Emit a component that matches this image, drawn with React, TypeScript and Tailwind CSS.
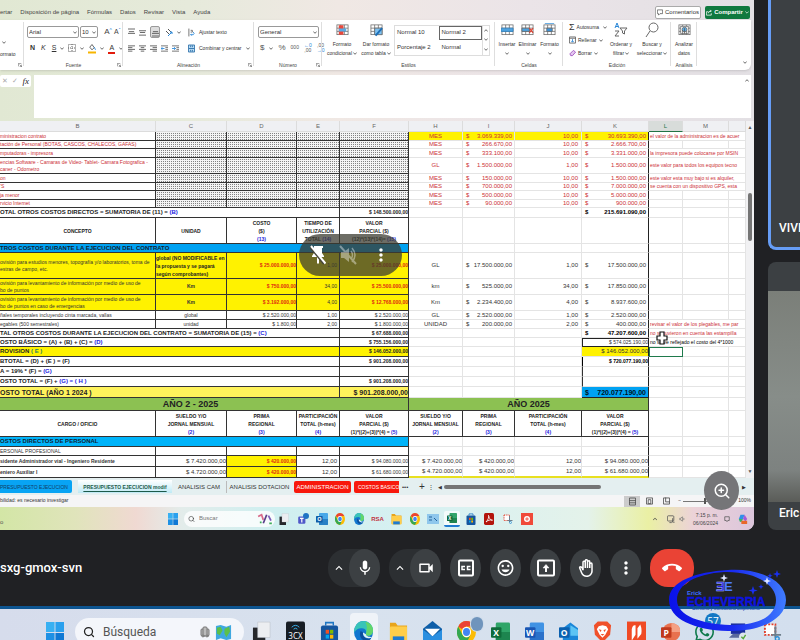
import React from "react";
import type { ReactNode } from "react";
import {
  MdMic, MdOutlineVideocam, MdMood, MdMoreVert, MdCallEnd,
  MdKeyboardArrowUp, MdOutlineBackHand,
} from "react-icons/md";
import { FaWhatsapp } from "react-icons/fa";
import { Search, ZoomIn, Luggage } from "lucide-react";

/* ---------- small shared drawings ---------- */

const Caret = () => (
  <svg viewBox="0 0 6 4" className="h-[3px] w-1 shrink-0" fill="none" stroke="#555" strokeWidth="1.3"><path d="M.5.5 3 3.2 5.5.5" /></svg>
);

const Lines = ({ rows }: { rows: string[] }) => (
  <svg viewBox="0 0 8 9" className="h-[9px] w-[7px]" fill="none" stroke="#555" strokeWidth="1"><path d={rows.join("")} /></svg>
);
const alignTop = ["M0 .5H8", "M1 3.5H7", "M0 5.5H8"];
const alignMid = ["M0 2.5H8", "M1 4.5H7", "M0 7.5H8"];
const alignLow = ["M1 3.5H7", "M0 5.5H8", "M0 8.5H8"];
const left = ["M0 1.5H8", "M0 3.5H5", "M0 5.5H8", "M0 7.5H5"];
const center = ["M0 1.5H8", "M2 3.5H6", "M0 5.5H8", "M2 7.5H6"];
const right = ["M0 1.5H8", "M3 3.5H8", "M0 5.5H8", "M3 7.5H8"];

const Indent = ({ d }: { d: string }) => (
  <svg viewBox="0 0 8 9" className="h-[9px] w-[7px]" fill="none" stroke="#666" strokeWidth="1">
    <path d="M0 1.5H8M5 3.5H8M5 5.5H8M0 7.5H8" /><path d={d} stroke="#2b88d8" />
  </svg>
);

const SheetIcon = ({ children }: { children?: ReactNode }) => (
  <svg viewBox="0 0 14 14" className="h-[14px] w-[13px]" fill="none" stroke="#666" strokeWidth=".8">
    <rect x="1" y="1.5" width="12" height="10.500" fill="#fff" /><path d="M1 5H13M1 8.500H13M5 1.500V12M9 1.500V12" />
    {children}
  </svg>
);

const WinLogo = ({ className }: { className: string }) => (
  <svg viewBox="0 0 20 20" className={className} preserveAspectRatio="none">
    <path d="M0 0H9.500V9.500H0z" fill="#38b0f2" /><path d="M10.500 0H20V9.500H10.500z" fill="#2aa0ee" />
    <path d="M0 10.500H9.500V20H0z" fill="#1e90e4" /><path d="M10.500 10.500H20V20H10.500z" fill="#0f78d4" />
  </svg>
);

const Chrome = ({ className }: { className: string }) => (
  <svg viewBox="0 0 20 20" className={className} preserveAspectRatio="none">
    <circle cx="10" cy="10" r="10" fill="#fbbc05" />
    <path d="M10 0A10 10 0 0 1 18.700 5H10A5 5 0 0 0 5.600 7.500L1.300 5A10 10 0 0 1 10 0z" fill="#ea4335" />
    <path d="M1.300 5A10 10 0 0 0 10 20L14.300 12.500A5 5 0 0 1 5.700 12.500z" fill="#34a853" />
    <circle cx="10" cy="10" r="4.800" fill="#fff" /><circle cx="10" cy="10" r="3.700" fill="#4285f4" />
  </svg>
);

const Edge = ({ className }: { className: string }) => (
  <svg viewBox="0 0 20 20" className={className} preserveAspectRatio="none">
    <circle cx="10" cy="10" r="10" fill="#1277cf" />
    <path d="M.3 8C1.500 3 5.500 0 10 0c6 0 10 4 10 8.500 0 3-2 5-5 5-2 0-3-.8-2.500-1.800 1.200-2.400-.5-5.200-4-5.200C5 6.500 1.500 7.500.3 11z" fill="#39c4b8" />
    <path d="M12 1c5 .5 8 4 8 7.500 0 3-2 5-5 5-2 0-3-.8-2.500-1.800C14 8 14 4 12 1z" fill="#63d66a" />
    <path d="M7 9c-2 4 0 8.500 5.500 9 3 0 5-1.500 6-3-4 2-10 .5-9-4.500" fill="#0c4f9c" />
    <path d="M9.500 10.500c-.3 3.500 3 5.800 7.500 5 1.500-.5 2.300-1 2.300-1C17 14.500 13 14.500 12.500 12z" fill="#dff2f8" />
  </svg>
);

const Folder = ({ className }: { className: string }) => (
  <svg viewBox="0 0 20 20" className={className} preserveAspectRatio="none">
    <path d="M1 1.500H7L9 4H19V18H1z" fill="#e8a51c" /><rect x="1" y="5" width="18" height="14" rx="1" fill="#ffce4a" />
    <path d="M4 19v-5H16v5z" fill="#1f7bd0" />
  </svg>
);

const Store = ({ className }: { className: string }) => (
  <svg viewBox="0 0 20 20" className={className} preserveAspectRatio="none">
    <path d="M6 4V1.500H14V4" fill="none" stroke="#1f77c4" strokeWidth="1.500" /><rect x="1" y="4" width="18" height="16" rx="2" fill="#15569f" />
    <path d="M6 8h3.500v3.500H6z" fill="#f25022" /><path d="M10.500 8H14v3.500h-3.500z" fill="#7fba00" />
    <path d="M6 12.500h3.500V16H6z" fill="#00a4ef" /><path d="M10.500 12.500H14V16h-3.500z" fill="#ffb900" />
  </svg>
);

const Snip = ({ className }: { className: string }) => (
  <svg viewBox="0 0 20 20" className={className} fill="none">
    <rect x="2" y="2" width="11" height="11" stroke="#e0402c" strokeWidth="2" strokeDasharray="2 1.500" fill="#fff" />
    <path d="M13 4V13H19M9 13l4 0M13 13v3" stroke="#6d7f8c" strokeWidth="2" /><circle cx="15" cy="17" r="2" stroke="#2a8fd6" strokeWidth="1.500" />
  </svg>
);

const TaskView = ({ className }: { className: string }) => (
  <svg viewBox="0 0 20 20" className={className} preserveAspectRatio="none"><path d="M1 6H14V20H1z" fill="#25272b" /><path d="M6 1H19V15H6z" fill="#eceef1" stroke="#b9bdc4" strokeWidth=".5" /></svg>
);

const DocTile = ({ letter, dark, light, className }: { letter: string; dark: string; light: string; className: string }) => (
  <svg viewBox="0 0 20 20" className={className}>
    <rect x="5" y="0" width="15" height="20" rx="1.500" fill={light} /><path d="M5 10H20V20H5z" fill={dark} opacity=".55" />
    <rect x="0" y="5" width="11" height="11" rx="1" fill={dark} />
    <text x="5.500" y="14" textAnchor="middle" fontSize="9" fontWeight="700" fill="#fff" fontFamily="Open Sans, sans-serif">{letter}</text>
  </svg>
);

/* ---------- ribbon ---------- */

function Group({ title, className, launcher, children }: { title: string; className: string; launcher?: boolean; children?: ReactNode }) {
  return (
    <section className={`relative flex shrink-0 flex-col after:absolute after:top-0.5 after:right-0 after:h-11 after:w-px after:bg-[#dedede] ${className}`}>
      <div className="flex h-10 items-center">{children}</div>
      <h2 className="text-center text-[5px] leading-[10px] text-[#444]">{title}</h2>
      {launcher && <svg viewBox="0 0 6 6" className="absolute right-[2px] bottom-[3px] h-1 w-1" fill="none" stroke="#666"><path d="M.5 5V.5H5M2.500 2.500 5.500 5.500M5.500 2.500V5.500H2.500" /></svg>}
    </section>
  );
}

function Pick({ value, label, className }: { value: string; label: string; className: string }) {
  return (
    <span className={`relative flex h-3 items-center ${className}`}>
      <select aria-label={label} className="h-3 w-full appearance-none rounded-xs border border-[#999] bg-white pl-px text-[6px] leading-[8px] text-[#333]">
        <option>{value}</option>
      </select>
      <span className="pointer-events-none absolute right-0.5"><Caret /></span>
    </span>
  );
}

function Big({ icon, lines, caret, single, className }: { icon: ReactNode; lines: string[]; caret?: boolean; single?: boolean; className: string }) {
  return (
    <button className={`flex shrink-0 flex-col items-center text-[5px] leading-[9px] whitespace-nowrap text-[#333] ${className}`}>
      <span className="mb-0.5 flex h-4 items-center">{icon}</span>
      {lines.map((l, i) => (
        <span key={l} className="flex h-[9px] items-center gap-px">{l}{caret && i === lines.length - 1 && <Caret />}</span>
      ))}
      {single && <span className="flex h-[9px] items-center"><Caret /></span>}
    </button>
  );
}

function Ribbon() {
  return (
    <div className="mr-[3px] flex h-[50px] shrink-0 overflow-hidden rounded-br-md bg-white shadow-sm">
      <Group title="" className="w-6" launcher>
        <button className="flex flex-col items-start gap-1.5 pt-5 text-[5px] leading-[9px] text-[#333]"><span className="ml-0.5"><Caret /></span>ormato</button>
      </Group>
      <Group title="Fuente" className="w-[99px]" launcher>
        <div className="flex flex-col gap-1 pl-[3px]">
          <div className="flex items-center gap-px">
            <Pick label="Fuente" value="Arial" className="w-[52px]" />
            <Pick label="Tamaño" value="10" className="w-[18px]" />
            <button className="ml-1 w-2.5 text-[8px] leading-3 text-[#444]">A<sup className="text-[5px] text-[#2b88d8]">^</sup></button>
            <button className="text-[7px] leading-3 text-[#444]">A<sup className="text-[5px] text-[#2b88d8]">ˇ</sup></button>
          </div>
          <div className="flex h-3 items-center gap-1 pl-[3px] text-[7px] leading-3 text-[#333]">
            <button className="font-bold">N</button><button className="ml-0.5 italic">K</button><button className="ml-0.5 underline">S</button><Caret />
            <svg viewBox="0 0 8 8" className="h-2 w-2" fill="none" stroke="#666" strokeDasharray="1 1"><path d="M.5.5H7.500V7.500H.5zM4 0V8M0 4H8" /></svg><Caret />
            <svg viewBox="0 0 9 11" className="h-[11px] w-2"><path d="M2 4 4.500 1 7 4.500 4.500 7z" fill="#fff" stroke="#555" /><path d="M7 4l1.500 3" stroke="#2b88d8" /><path d="M0 9H9V11H0z" fill="#f7b500" /></svg><Caret />
            <button className="h-[11px] border-b-2 border-[#e11b0c] px-px leading-[10px]">A</button><Caret />
          </div>
        </div>
      </Group>
      <Group title="Alineación" className="w-[131px]" launcher>
        <div className="flex w-[61px] flex-col gap-1 pl-[5px]">
          <div className="flex h-3 items-center gap-1">
            <Lines rows={alignTop} /><Lines rows={alignMid} />
            <span className="flex h-3 w-2.5 items-center justify-center rounded-xs border border-[#999] bg-[#ddd]"><Lines rows={alignLow} /></span>
            <svg viewBox="0 0 8 9" className="ml-px h-[9px] w-2" fill="none" stroke="#555"><path d="M1 3l3 3M3 1l3 3" /><path d="M3 8 7 4M5 4H7V6" stroke="#2b88d8" /></svg><Caret />
          </div>
          <div className="flex h-3 items-center gap-1">
            <Lines rows={left} /><Lines rows={center} /><Lines rows={right} /><Indent d="M4 4.500H0M1.500 3 0 4.500 1.500 6" /><Indent d="M0 4.500H4M2.500 3 4 4.500 2.500 6" />
          </div>
        </div>
        <div className="flex flex-col gap-1 pl-1 text-[5px] leading-3 text-[#333]">
          <button className="flex items-center gap-1"><svg viewBox="0 0 8 9" className="h-[9px] w-[7px]" fill="none" stroke="#666"><path d="M1 0V9M3 2H5V4H3" /><path d="M3 7H6Q8 6 6 4M4 6 3 7 4 8" stroke="#2b88d8" /></svg>Ajustar texto</button>
          <button className="flex items-center gap-1 whitespace-nowrap"><svg viewBox="0 0 8 9" className="h-[9px] w-[7px]" fill="#b9dcf5" stroke="#2b6ea8"><path d="M.5.5H7.500V8.500H.5zM3 1V3M5 1V3M3 6V8M5 6V8M1 4.500H7" /></svg>Combinar y centrar<Caret /></button>
        </div>
      </Group>
      <Group title="Número" className="w-[68px]" launcher>
        <div className="flex flex-col gap-1 pl-1">
          <Pick label="Formato de número" value="General" className="w-[61px]" />
          <div className="flex h-3 items-center gap-[5px] pl-0.5 text-[8px] text-[#555]">
            <button>$</button><Caret /><button>%</button><button className="text-[5px]">000</button>
            <button className="text-[5px] leading-[5px]"><span className="block text-[#2b88d8]">←0</span>,00</button><button className="text-[5px] leading-[5px]">,00<span className="block text-[#2b88d8]">→0</span></button>
          </div>
        </div>
      </Group>
      <Group title="Estilos" className="w-[173px]">
        <Big className="ml-[3px] w-[34px]" caret lines={["Formato", "condicional"]} icon={<SheetIcon><path d="M3 2H8V12H3z" fill="#e8483c" stroke="none" /><path d="M3 5.500H11V8.500H3z" fill="#58a9e4" stroke="none" /></SheetIcon>} />
        <Big className="w-[34px]" caret lines={["Dar formato", "como tabla"]} icon={<SheetIcon><path d="M5 5H13V12H5z" fill="#7cc0f0" /><path d="M6 13 13 5" stroke="#1c6fb8" strokeWidth="2" /></SheetIcon>} />
        <div className="ml-px flex h-[31px] w-24 border border-[#ddd] text-[6px] text-[#333]">
          <div className="grid flex-1 grid-cols-2 grid-rows-2 text-left">
            <button className="pl-0.5 text-left">Normal 10</button><button className="border border-[#666] pl-0.5 text-left">Normal 2</button>
            <button className="pl-0.5 text-left whitespace-nowrap">Porcentaje 2</button><button className="pl-[3px] text-left">Normal</button>
          </div>
          <div className="flex w-[7px] flex-col items-center justify-around border-l border-[#ddd]"><span className="flex rotate-180"><Caret /></span><Caret /><Caret /></div>
        </div>
      </Group>
      <Group title="Celdas" className="w-[68px]">
        <Big className="ml-0.5 w-5" single lines={["Insertar"]} icon={<SheetIcon><path d="M0 5H13V8.500H0z" fill="#4fa3e0" stroke="#2b7fc0" /></SheetIcon>} />
        <Big className="w-[21px]" single lines={["Eliminar"]} icon={<SheetIcon><path d="M1 5H9V8.500H1z" fill="#4fa3e0" /><path d="M9 5l4 5M13 5l-4 5" stroke="#e04030" strokeWidth="1.200" /></SheetIcon>} />
        <Big className="w-[23px]" single lines={["Formato"]} icon={<SheetIcon><path d="M4 5H10V8.500H4z" fill="#3b94dc" /><path d="M2 0H12" stroke="#3b94dc" /></SheetIcon>} />
      </Group>
      <Group title="Edición" className="w-[108px]">
        <div className="flex w-[44px] flex-col pl-1.5 text-[5px] leading-[13px] text-[#333]">
          <button className="flex items-center gap-0.5"><span className="w-[7px] text-[9px]">Σ</span>Autosuma<span className="ml-0.5"><Caret /></span></button>
          <button className="flex items-center gap-0.5"><svg viewBox="0 0 8 8" className="h-2 w-[7px]" fill="none" stroke="#666"><path d="M.5.5H7.500V7.500H.5zM0 2H8" /><path d="M4 3V6M2.500 5 4 6.500 5.500 5" stroke="#2b88d8" /></svg>Rellenar<Caret /></button>
          <button className="flex items-center gap-0.5"><svg viewBox="0 0 8 8" className="h-2 w-[7px]" fill="#e4c8f0" stroke="#a050c0"><path d="M1 5 5 1 7.500 3 4 7H2z" /></svg>Borrar<Caret /></button>
        </div>
        <Big className="w-7" caret lines={["Ordenar y", "filtrar"]} icon={
          <svg viewBox="0 0 14 16" className="h-4 w-[14px]" fill="none" stroke="#666"><path d="M1 6 3 1 5 6M2 4.500H4" stroke="#2b88d8" /><path d="M1 9H5L1 14H5" /><path d="M6 6H13L10.500 9V12L8.500 11V9z" /></svg>} />
        <Big className="ml-px w-8" caret lines={["Buscar y", "seleccionar"]} icon={<svg viewBox="0 0 14 16" className="h-4 w-[14px]" fill="none" stroke="#666"><circle cx="8.500" cy="5.500" r="4.500" /><path d="M5 9 1 15" /></svg>} />
      </Group>
      <Group title="Análisis" className="w-[26px]">
        <Big className="w-[26px]" lines={["Analizar", "datos"]} icon={<SheetIcon><rect x="3" y="3" width="8" height="8" fill="#fff" /><circle cx="7" cy="6.500" r="2.500" fill="#5aaee8" /><path d="M5 11V7M7 11V5M9 11V8" stroke="#555" /></SheetIcon>} />
      </Group>
      <div className="flex flex-1 items-end justify-end pr-1 pb-1.5"><Caret /></div>
    </div>
  );
}

/* ---------- worksheet ---------- */

type Cell = { t?: ReactNode; m?: string; c?: string; s?: number };

const B = ({ children }: { children: ReactNode }) => <span className="text-[#2222e0]">{children}</span>;

const K = "border-b border-r border-[#333]";
const G = "border-b border-r border-[#e4e4e4]";
const GK = "border-b border-r border-b-[#e4e4e4] border-r-[#222]";
const HATCH = K + " bg-[linear-gradient(#f4f4f4_1px,transparent_1px),linear-gradient(90deg,#f4f4f4_1px,#828282_1px)] bg-[length:2px_2px]";
const RED = " text-[#cc2f36]";
const YEL = " bg-[#fff200]";
const SMALL = " text-[5px]";
const hatch: Cell[] = [{ c: HATCH }, { c: HATCH }, { c: HATCH }, { c: HATCH }];
const tail: Cell[] = [{ c: G }, { c: G }, { c: G }];
const blankRight: Cell[] = [{ c: G }, { c: G }, { c: G }, { c: GK }, ...tail];
const remark = (t: string, color = RED): Cell[] => [{ t, c: G + color + SMALL + " pl-px", s: 3 }];

const direct = (name: ReactNode, h: string, unit: string, price: string, qty: string, total: string, note?: string, hot = ""): { h: string; cells: Cell[] } => ({
  h,
  cells: [
    { t: name, c: K + RED + SMALL },
    ...hatch,
    { t: unit, c: G + RED + hot + " text-center" },
    { m: price, c: G + RED + hot },
    { t: qty, c: G + RED + hot + " text-right pr-[3px]" },
    { m: total, c: GK + RED + hot },
    ...(note ? remark(note) : tail),
  ],
});

const work = (
  name: ReactNode, h: string, leftCells: string[], unit: string, price: string, qty: string, total: string, hot: boolean, note?: string
): { h: string; cells: Cell[] } => {
  const y = hot ? YEL : "";
  const r = hot ? " font-bold text-[#e02a10]" : " text-[#333]";
  return {
    h,
    cells: [
      { t: name, c: K + y + SMALL + " text-[#333]" },
      { t: leftCells[0], c: K + y + SMALL + " text-center" + (hot ? " font-bold" : "") },
      { t: leftCells[1], c: K + y + r + SMALL + " text-right" },
      { t: leftCells[2], c: K + y + SMALL + " text-right pr-0.5" },
      { t: leftCells[3], c: K + y + r + SMALL + " text-right" },
      { t: unit, c: G + " text-center" },
      { m: price, c: G },
      { t: qty, c: G + " text-right pr-[3px]" },
      { m: total, c: GK },
      ...(note ? remark(note) : tail),
    ],
  };
};

const three = (a: string, b: string, c: ReactNode) => <>{a}<br />{b}<br />{c}</>;
const HEAD = K + " text-center font-bold text-[5px] leading-[8px] text-[#222]";

const sumRow = (h: string, label: ReactNode, value: string, rest: Cell[], bg = "", big = false): { h: string; cells: Cell[] } => ({
  h,
  cells: [
    { t: label, c: K + bg + " font-bold text-[#222]" + (big ? " text-[7px]" : ""), s: 4 },
    { t: value, c: K + bg + " text-right font-bold text-[#222]" + (big ? " text-[7px]" : " text-[5px]") },
    ...rest,
  ],
});

const kOnly = (cell: Cell, end: Cell[] = tail): Cell[] => [{ c: G }, { c: G }, { c: G }, cell, ...end];

const rows: { h: string; cells: Cell[] }[] = [
  direct("ministracion contrato", "h-[9px]", "MES", "3.069.339,00", "10,00", "30.693.390,00", "el valor de la administracion es de acuer", YEL),
  direct("tación de Personal (BOTAS, CASCOS, CHALECOS, GAFAS)", "h-2", "MES", "266.670,00", "10,00", "2.666.700,00"),
  direct("mputadoras - impresora", "h-[9px]", "MES", "333.100,00", "10,00", "3.331.000,00", "la impresora puede colocarse por MSIN"),
  direct(<>encias Software - Camaras de Video- Tablet- Camara Fotografica -<br />caner - Odometro</>, "h-4", "GL", "1.500.000,00", "1,00", "1.500.000,00", "este valor para todos los equipos tecno"),
  direct("on", "h-[9px]", "MES", "150.000,00", "10,00", "1.500.000,00", "este valor esta muy bajo si es alquiler,"),
  direct("'S", "h-2", "MES", "700.000,00", "10,00", "7.000.000,00", "se cuenta con un dispositivo GPS, esta"),
  direct("ja menor", "h-[9px]", "MES", "500.000,00", "10,00", "5.000.000,00"),
  direct("rvicio Internet", "h-2", "MES", "90.000,00", "10,00", "900.000,00"),
  sumRow("h-2.5", <>OTAL OTROS COSTOS DIRECTOS = SUMATORIA DE (11) = <B>(B)</B></>, "$ 148.500.000,00", kOnly({ m: "215.691.090,00", c: GK + " font-bold text-black" })),
  {
    h: "h-[26px]",
    cells: [
      { t: "CONCEPTO", c: HEAD }, { t: "UNIDAD", c: HEAD }, { t: three("COSTO", "($)", <B>(13)</B>), c: HEAD },
      { t: three("TIEMPO DE", "UTILIZACIÓN", <>TOTAL <B>(14)</B></>), c: HEAD },
      { t: three("VALOR", "PARCIAL ($)", <>(12)*(13)*(14)= <B>(15)</B></>), c: HEAD }, ...blankRight,
    ],
  },
  { h: "h-[9px]", cells: [{ t: "TROS COSTOS DURANTE LA EJECUCION DEL CONTRATO", c: K + " bg-[#00a2f2] font-bold text-[#123]", s: 5 }, ...blankRight] },
  work(
    <>ovisión para estudios menores, topografía y/o laboratorios, toma de<br />estras de campo, etc.</>, "h-[26px]",
    ["", "$ 25.000.000,00", "1,00", "$ 25.000.000,00"], "GL", "17.500.000,00", "1,00", "17.500.000,00", true
  ),
  work(<>ovisión para levantamiento de información por medio de uso de<br />bo de puntos</>, "h-4", ["Km", "$ 750.000,00", "34,00", "$ 25.500.000,00"], "km", "525.000,00", "34,00", "17.850.000,00", true),
  work(<>ovisión para levantamiento de información por medio de uso de<br />bo de puntos en caso de emergencias</>, "h-4", ["Km", "$ 3.192.000,00", "4,00", "$ 12.768.000,00"], "Km", "2.234.400,00", "4,00", "8.937.600,00", true),
  work("ñales temporales incluyendo cinta marcada, vallas", "h-[9px]", ["global", "$ 2.520.000,00", "1,00", "$ 2.520.000,00"], "GL", "2.520.000,00", "1,00", "2.520.000,00", false),
  work("egables (500 semestrales)", "h-[9px]", ["unidad", "$ 1.800,00", "2,00", "$ 1.800.000,00"], "UNIDAD", "200.000,00", "2,00", "400.000,00", false, "revisar el valor de los plegables, me par"),
  sumRow("h-[9px]", <>TAL OTROS COSTOS DURANTE LA EJECUCION DEL CONTRATO = SUMATORIA DE (15) = <B>(C)</B></>, "$ 67.688.000,00", kOnly({ m: "47.207.600,00", c: GK + " font-bold text-black" }, remark("no se tuvieron en cuenta las estampilla"))),
  sumRow("h-[9px]", <>OSTO BÁSICO = (A) + (B) + (C) = <B>(D)</B></>, "$ 755.156.000,00", kOnly({ t: "$ 574.025.190,00", c: "border border-[#222] text-right text-[5px]" }, remark("no se ve reflejado el costo del 4*1000", " text-black"))),
  sumRow("h-2.5", <>ROVISION <span className="text-[#2a7d6a]">( E )</span></>, "$ 146.052.000,00", kOnly({ t: "$ 146.052.000,00", c: GK + YEL + " text-right" }, [{ c: "border border-[#1f7a4c]" }, { c: G }, { c: G }]), YEL),
  sumRow("h-2.5", "BTOTAL = (D) + (E ) =  (F)", "$ 901.208.000,00", kOnly({ t: "$ 720.077.190,00", c: GK + " border-l text-right font-bold text-[5px] text-black" })),
  sumRow("h-2.5", <>A = 19% * (F) = <B>(G)</B></>, "", kOnly({ c: GK + " border-l" })),
  sumRow("h-2.5", <>OSTO TOTAL = (F) + <B>(G) = ( H )</B></>, "$ 901.208.000,00", kOnly({ c: GK + " border-l" })),
  sumRow("h-[11px]", "OSTO TOTAL (AÑO 1 2024 )", "$ 901.208.000,00", kOnly({ m: "720.077.190,00", c: "border-b border-r border-[#222] bg-[#00a2f2] font-bold text-[7px] text-[#012]" }), " bg-[#fff35c]", true),
  {
    h: "h-[13px]",
    cells: [
      { t: "AÑO 2 - 2025", c: K + " bg-[#8cc152] pr-[27px] text-center text-[9px] leading-[12px] font-bold text-[#222]", s: 5 },
      { t: "AÑO 2025", c: K + " bg-[#8cc152] text-center text-[9px] leading-[12px] font-bold text-[#222]", s: 4 }, ...tail,
    ],
  },
  {
    h: "h-[26px]",
    cells: [
      { t: "CARGO / OFICIO", c: HEAD }, { t: three("SUELDO Y/O", "JORNAL MENSUAL", <B>(2)</B>), c: HEAD }, { t: three("PRIMA", "REGIONAL", <B>(3)</B>), c: HEAD },
      { t: three("PARTICIPACIÓN", "TOTAL (h-mes)", <B>(4)</B>), c: HEAD }, { t: three("VALOR", "PARCIAL ($)", <>(1)*((2)+(3))*(4) = <B>(5)</B></>), c: HEAD },
      { t: three("SUELDO Y/O", "JORNAL MENSUAL", <B>(2)</B>), c: HEAD }, { t: three("PRIMA", "REGIONAL", <B>(3)</B>), c: HEAD },
      { t: three("PARTICIPACIÓN", "TOTAL (h-mes)", <B>(4)</B>), c: HEAD }, { t: three("VALOR", "PARCIAL ($)", <>(1)*((2)+(3))*(4) = <B>(5)</B></>), c: HEAD },
      ...tail,
    ],
  },
  { h: "h-2.5", cells: [{ t: "OSTOS DIRECTOS DE PERSONAL", c: K + " bg-[#00b4fa] font-bold text-[#123]", s: 5 }, ...blankRight] },
  { h: "h-[9px]", cells: [{ t: "ERSONAL PROFESIONAL", c: K + SMALL }, { c: K }, { c: K }, { c: K }, { c: K }, ...blankRight] },
  ...[["sidente Administrador vial - Ingeniero Residente", "$ 7.420.000,00", "$ 94.080.000,00"], ["eniero Auxiliar I", "$ 4.720.000,00", "$ 61.680.000,00"]].map(([n, pay, total], i) => {
    const e = i ? " border-b-2 border-b-[#e8e020]" : "";
    return {
      h: "h-[11px]",
      cells: [
        { t: n, c: K + SMALL + " font-bold" }, { t: pay, c: K + " text-right" }, { t: "$ 420.000,00", c: K + YEL + SMALL + " text-right font-bold text-[#e02a10]" },
        { t: "12,00", c: K + " text-right pr-0.5" }, { t: total, c: K + SMALL + " text-right" },
        { t: pay, c: G + e + " text-right" }, { t: "$ 420.000,00", c: G + e + " text-right" }, { t: "12,00", c: G + e + " text-right" }, { t: total, c: GK + e + " text-right" }, ...tail,
      ],
    };
  }),
];

/* The unit of the first provision carries its own condition on three lines. */
rows[11].cells[1] = { t: three("global (NO MODIFICABLE en", "la propuesta y se pagará", "según comprobantes)"), c: K + YEL + " text-left text-[5px] leading-[8px] font-bold text-[#222]" };

const columns: [string, string][] = [
  ["B", "w-[156px]"], ["C", "w-[71px]"], ["D", "w-[70px]"], ["E", "w-[43px]"], ["F", "w-[69px]"],
  ["H", "w-[54px]"], ["I", "w-[52px]"], ["J", "w-[67px]"], ["K", "w-[67px]"], ["L", "w-[34px]"], ["M", "w-[46px]"], ["", "w-auto"],
];

function Worksheet() {
  return (
    <div className="flex min-h-0 flex-1 overflow-hidden">
      <div className="min-w-0 flex-1 overflow-hidden bg-white">
        <table className="w-full table-fixed border-separate border-spacing-0 font-['Liberation_Sans',sans-serif] text-[6px] leading-[7px] text-[#333]">
          <thead>
            <tr>
              {columns.map(([name, w], i) => (
                <th key={i} scope="col" className={`h-[11px] border-r border-b border-[#dcdcdc] p-0 text-[6px] leading-[7px] font-normal ${w} ${name === "L" ? "border-b-[#217346] bg-[#d8dcda] text-[#217346]" : "bg-[#eff0f3] text-[#666]"}`}>{name}</th>
              ))}
            </tr>
          </thead>
          <tbody>
            {rows.map((r, i) => (
              <tr key={i}>
                {r.cells.map((c, j) => (
                  <td key={j} colSpan={c.s} className={`overflow-hidden p-0 align-middle whitespace-nowrap ${r.h} ${c.c ?? ""}`}>
                    {c.m ? <span className="flex justify-between pr-0.5 pl-[3px]"><span>$</span><span>{c.m}</span></span> : c.t}
                  </td>
                ))}
              </tr>
            ))}
          </tbody>
        </table>
      </div>
      <div className="flex w-2 shrink-0 flex-col items-center bg-[#f1f1f3] py-1 text-[5px] leading-[5px] text-[#555]">
        <span>▲</span><span className="mt-[63px] h-12 w-1 rounded-full bg-[#757575]" /><span className="mt-auto">▼</span>
      </div>
    </div>
  );
}

/* ---------- shared screen ---------- */

function InnerTaskbar() {
  return (
    <div className="flex h-[23px] shrink-0 items-center bg-[linear-gradient(90deg,#d3e6a6_0%,#e0e4bb_10%,#f0d9d2_18%,#e3ecea_24%,#cfeff0_36%,#d9f1f1_60%,#e4f2ea_78%,#eaf0a4_86%,#ecd2d8_92%,#dcc6dc_100%)]">
      <span className="w-[168px] pt-2 text-[6px] text-[#555]">o</span>
      <WinLogo className="h-3 w-2.5" />
      <label className="ml-1.5 flex h-4 w-[91px] items-center rounded-full bg-white/80 pl-1">
        <Search className="h-2 w-[7px] text-[#333]" />
        <input aria-label="Buscar" placeholder="Buscar" className="ml-1 w-10 bg-transparent text-[6px] placeholder:text-[#777]" />
        <svg viewBox="0 0 20 14" className="ml-auto h-3 w-5" fill="none" strokeWidth="2"><path d="M2 4 6 2 8 8" stroke="#d86a8a" /><path d="M8 12 12 2" stroke="#5b3d8a" /><path d="M14 3 17 9" stroke="#7a5ab8" /><path d="M4 11h2M15 12h3" stroke="#3fae5c" /></svg>
      </label>
      <div className="grid w-[261px] shrink-0 grid-cols-14 items-center justify-items-center">
        <TaskView className="h-3 w-2.5" />
        <svg viewBox="0 0 20 20" className="h-3.5 w-3"><rect x="2" y="6" width="12" height="12" rx="2" fill="#5059c9" /><circle cx="15" cy="5" r="5" fill="#1e73c4" /><path d="M5 9h6M8 9v7" stroke="#fff" strokeWidth="2" /></svg>
        <DocTile letter="O" dark="#0f5ea8" light="#48a8e8" className="h-3.5 w-3" />
        <Chrome className="h-3 w-2.5" /><Edge className="h-3 w-2.5" />
        <span className="text-[6px] leading-3 font-bold text-[#c0303c]">RSA</span>
        <Folder className="h-3 w-[11px]" /><Chrome className="h-3 w-2.5" />
        <svg viewBox="0 0 12 10" className="h-3 w-3"><rect width="12" height="10" fill="#8fc7ec" /><path d="M2 3h3M2 6h3M7 4l3 3" stroke="#23639c" /></svg>
        <span className="flex h-4 w-4 items-center justify-center rounded-xs border-b-2 border-[#1f7bd0] bg-white/70"><DocTile letter="X" dark="#0f6b3a" light="#34a46a" className="h-3 w-2.5" /></span>
        <Store className="h-3 w-2.5" />
        <svg viewBox="0 0 20 20" className="h-3 w-2.5" preserveAspectRatio="none"><rect width="20" height="20" rx="3" fill="#b3140c" /><path d="M4 15C9 11 10 6 9 4c2 6 4 8 8 8-5-1-9 0-13 3z" fill="none" stroke="#fff" strokeWidth="1.500" /></svg>
        <Snip className="h-3 w-2.5" />
        <svg viewBox="0 0 20 20" className="h-3.5 w-3"><rect width="20" height="20" fill="#f04a3a" /><circle cx="10" cy="10" r="5" fill="#fff" /><path d="M7 10h6M10 7v6" stroke="#f04a3a" strokeWidth="1.500" /></svg>
      </div>
      <div className="ml-auto flex items-center gap-1 pr-1.5 text-[#444]">
        <MdKeyboardArrowUp className="h-2.5 w-2" />
        <svg viewBox="0 0 10 10" className="ml-1 h-2.5 w-2" fill="none" stroke="#555"><rect x=".5" y="1" width="8" height="6.500" rx="1" /><path d="M3 9.500H6M7 4V9H9.500" /></svg>
        <svg viewBox="0 0 8 8" className="h-2 w-1.5" fill="none" stroke="#777"><path d="M1 3H2.500L4.500 1V7L2.500 5H1zM6 2.500Q7.500 4 6 5.500" /></svg>
        <span className="ml-1 text-right text-[5px] leading-2">7:15 p. m.<br />06/06/2024</span>
        <svg viewBox="0 0 8 8" className="ml-0.5 h-2 w-1.5" fill="none" stroke="#555"><path d="M1 1H7V6H5L4 7.500 3 6H1z" /></svg>
        <svg viewBox="0 0 12 12" className="ml-1 h-3 w-2.5"><path d="M1 6 3 1H8L6 6z" fill="#2f8fe8" /><path d="M8 1 11 6 9 9 6 6z" fill="#a45ad8" /><path d="M1 6H6L4 10 2 9z" fill="#35b56a" /><path d="M4 8H11V12H4z" fill="#e8682a" /></svg>
      </div>
    </div>
  );
}

function SharedScreen() {
  return (
    <div className="relative flex min-w-0 flex-1 flex-col overflow-hidden rounded-br-lg bg-[linear-gradient(90deg,#e1e8d3_0%,#e6eadb_25%,#f0e8e4_45%,#ebe4e8_70%,#e3e0e4_100%)] font-['Liberation_Sans',sans-serif]">
      <nav className="flex h-5 shrink-0 items-center gap-2 pt-1 pr-1 text-[6px] text-[#444]">
        <button>ertar</button><button>Disposición de página</button><button>Fórmulas</button><button>Datos</button><button>Revisar</button><button>Vista</button><button>Ayuda</button>
        <button className="ml-auto flex h-[13px] w-[46px] shrink-0 items-center justify-center gap-0.5 rounded-xs border border-[#aaa] bg-white text-[6px] leading-none text-[#333]"><svg viewBox="0 0 8 8" className="h-[7px] w-1.5" fill="none" stroke="#555"><path d="M.5.5H7.500V5.500H4L2 7.500V5.500H.5z" /></svg>Comentarios</button>
        <button className="-ml-1 flex h-[13px] w-[45px] shrink-0 items-center justify-center gap-0.5 rounded-xs bg-[#10793f] text-[6px] leading-none font-bold text-white"><svg viewBox="0 0 8 8" className="h-[7px] w-1.5" fill="none" stroke="#fff"><path d="M3 3H.5V7.500H7V5M3 5Q3 2 7 2M5.500.5 7 2 5.500 3.500" /></svg>Compartir<svg viewBox="0 0 6 4" className="h-[3px] w-1" fill="none" stroke="#fff"><path d="M.5.5 3 3 5.500.5" /></svg></button>
      </nav>
      <Ribbon />
      <div className="mt-[5px] mb-[3px] flex h-[43px] shrink-0 items-start gap-[3px] pr-[3px]">
        <div className="flex h-3 w-[31px] items-center justify-around rounded-xs bg-white text-[7px] text-[#aaa]">
          <button aria-label="Cancelar">✕</button><button aria-label="Aceptar">✓</button><button className="font-['Liberation_Serif',serif] text-[9px] leading-3 text-[#222] italic">fx</button>
        </div>
        <div className="relative h-full flex-1">
          <textarea aria-label="Barra de fórmulas" className="block h-full w-full resize-none bg-white p-1 text-[7px]" />
          <span className="absolute top-1 right-0.5 flex rotate-180"><Caret /></span>
        </div>
      </div>
      <Worksheet />
      <div className="flex h-[17px] shrink-0 items-center bg-[#e4eff0] text-[6px] leading-3 whitespace-nowrap text-[#333]">
        <button className="h-[13px] w-[72px] rounded-r-xs bg-[#08a4f4] text-left text-[5px] text-[#123c66]">PRESUPUESTO EJECUCION</button>
        <button className="ml-1.5 h-[13px] w-[94px] bg-[linear-gradient(#fff,#bfeaf5)] text-[5px] font-bold text-[#1c5a4a] underline underline-offset-2">PRESUPUESTO EJECUCION modif</button>
        <button className="w-[54px]">ANALISIS CAM</button>
        <button className="w-[66px] border-l border-[#bbb]">ANALISIS DOTACION</button>
        <button className="ml-0.5 h-3 w-[57px] rounded-xs bg-[#f8180c] text-[6px] text-white">ADMINISTRACION</button>
        <button className="ml-[3px] h-3 w-[45px] rounded-l-xs bg-[#f8180c] pl-1 text-left text-[5px] text-white">COSTOS BASICO</button>
        <span className="ml-[3px] w-[14px]">•••</span><button className="w-3 text-[10px]">+</button><span className="w-2.5">⋮</span>
        <span className="text-[5px]">◀</span><span className="ml-0.5 h-1 w-[157px] rounded-full bg-[#757575]" /><span className="mr-2 ml-auto text-[5px]">▶</span>
      </div>
      <div className="flex h-3 shrink-0 items-center bg-[#f5f5f6] text-[5px] text-[#333]">
        <span>bilidad: es necesario investigar</span>
        <div className="ml-auto flex items-center">
          <span className="flex h-[11px] w-4 items-center justify-center bg-[#ccc]"><Lines rows={["M.5 .5H7.500V8.500H.5z", "M0 3.500H8", "M0 6H8"]} /></span>
          <svg viewBox="0 0 8 8" className="ml-1.5 h-2 w-[7px]" fill="none" stroke="#555"><path d="M.5.5H7.500V7.500H.5zM2.500 2.500H5.500V7H2.500z" /></svg>
          <svg viewBox="0 0 8 8" className="ml-2.5 h-2 w-[7px]" fill="none" stroke="#555"><path d="M.5.5H7.500V7.500H.5zM3 0V5H8" /></svg>
          <span className="ml-2">−</span>
          <input type="range" aria-label="Zoom" className="mx-0.5 h-px w-11 appearance-none bg-[#777] [&::-webkit-slider-thumb]:h-1.5 [&::-webkit-slider-thumb]:w-0.5 [&::-webkit-slider-thumb]:appearance-none [&::-webkit-slider-thumb]:bg-[#555]" />
          <span>+</span><span className="mr-[3px] ml-1.5">100%</span>
        </div>
      </div>
      <InnerTaskbar />

      <svg viewBox="0 0 12 14" className="absolute top-[331px] left-[656px] h-3.5 w-3" fill="#fff" stroke="#111" strokeWidth="1.200"><path d="M4 1H8V5H11V9H8V13H4V9H1V5H4z" /></svg>
      <div className="absolute top-[234px] left-[299px] flex h-[42px] w-[103px] items-center justify-around rounded-full bg-[#3c3c32]/75 px-1 text-white">
        <button aria-label="Desfijar"><svg viewBox="0 0 16 20" className="h-5 w-4" fill="#fff"><path d="M4 1H13V3H12V8L14 11V12H9V18L8 19 7 18V12H2V11L4 8z" /><path d="M0 2 14 19" stroke="#46463a" strokeWidth="2" /><path d="M1 1 15.500 18.500" stroke="#fff" strokeWidth="2" /></svg></button>
        <button aria-label="Silenciar" className="opacity-40"><svg viewBox="0 0 18 20" className="h-5 w-[18px]" fill="#fff"><path d="M2 7H5L10 3V17L5 13H2z" /><path d="M12 6Q15 10 12 14M13 3Q19 10 13 17" fill="none" stroke="#fff" strokeWidth="1.500" /><path d="M1 1 17 19" stroke="#fff" strokeWidth="2" /></svg></button>
        <button aria-label="Más"><MdMoreVert className="h-6 w-5" /></button>
      </div>
      <button aria-label="Ampliar" className="absolute right-[15px] bottom-5 flex h-[39px] w-[35px] items-center justify-center rounded-[50%] bg-[#757578] text-white"><ZoomIn className="h-5 w-[18px]" /></button>
    </div>
  );
}

/* ---------- call controls and desktop ---------- */

const circle = "flex h-[38px] w-[31px] items-center justify-center rounded-[50%] bg-[#3c4043] text-white";

function CallBar() {
  return (
    <footer className="flex h-[76px] shrink-0 items-center text-white">
      <span className="w-[328px] font-['Roboto',sans-serif] text-[13px] font-medium">sxg-gmox-svn</span>
      <div className="flex items-center gap-[9px]">
        <div className="flex h-[38px] w-[52px] items-center justify-between rounded-[18px] bg-[#2c2f32] pl-1"><button aria-label="Opciones de audio"><MdKeyboardArrowUp className="h-4 w-3.5" /></button><button aria-label="Micrófono" className={circle}><MdMic className="h-5 w-[18px]" /></button></div>
        <div className="flex h-[38px] w-[52px] items-center justify-between rounded-[18px] bg-[#2c2f32] pl-1"><button aria-label="Opciones de video"><MdKeyboardArrowUp className="h-4 w-3.5" /></button><button aria-label="Cámara" className={circle}><MdOutlineVideocam className="h-5 w-[18px]" /></button></div>
        <button aria-label="Subtítulos" className={circle}><svg viewBox="0 0 16 18" className="h-[18px] w-4" fill="none" stroke="#fff" strokeWidth="2"><rect x="1" y="1.500" width="14" height="15" rx="1" /><path d="M7 7.500H4V10.500H7M12.500 7.500H9.500V10.500H12.500" strokeWidth="1.500" /></svg></button>
        <button aria-label="Reacciones" className={circle}><MdMood className="h-[22px] w-[19px]" /></button>
        <button aria-label="Presentar" className={circle}><svg viewBox="0 0 18 18" className="h-[18px] w-[18px]" fill="none" stroke="#fff" strokeWidth="2"><rect x="1" y="1.500" width="16" height="15" rx="1" /><path d="M9 13V8" /><path d="M6 9 9 5.500 12 9z" fill="#fff" strokeWidth=".5" /></svg></button>
        <button aria-label="Levantar la mano" className={circle}><MdOutlineBackHand className="h-[22px] w-[18px]" /></button>
        <button aria-label="Más opciones" className={circle}><MdMoreVert className="h-[22px] w-5" /></button>
        <button aria-label="Salir" className="flex h-[38px] w-11 items-center justify-center rounded-[18px] bg-[#ea4335] text-white"><MdCallEnd className="h-[22px] w-5" /></button>
      </div>
    </footer>
  );
}

const slot = "flex h-[31px] w-[34px] shrink-0 items-start justify-center pt-3";
const app = "h-[22px] w-[19px]";

function Taskbar() {
  return (
    <footer className="flex h-[34px] shrink-0 items-start overflow-hidden border-t-3 border-[#0d5591] bg-[linear-gradient(90deg,#d6dcec,#d8e2ee_45%,#d3dfee)] pl-[46px]">
      <WinLogo className="mt-[13px] h-[21px] w-[18px] shrink-0" />
      <label className="mt-[9px] ml-[11px] flex h-7 w-[169px] shrink-0 items-center rounded-full bg-[#f4f6fb] pl-2">
        <Search className="h-4 w-3 text-[#222]" strokeWidth={2.500} />
        <input aria-label="Búsqueda" placeholder="Búsqueda" className="ml-2 w-24 bg-transparent font-['Roboto',sans-serif] text-[12px] placeholder:text-[#555]" />
        <Luggage className="h-[18px] w-3 text-[#777]" fill="#bbb" />
        <svg viewBox="0 0 18 18" className="ml-1 h-[19px] w-[17px]"><path d="M1 2 6 1 12 3 17 1V16L12 17 6 15 1 17z" fill="#3fa8e0" /><path d="M2 4l4-1 2 4-3 5-3-2zM10 5l5-2 1 5-4 6-2-4z" fill="#5cc04a" /></svg>
      </label>
      <div className="flex flex-1">
        <span className={slot}><TaskView className={app} /></span>
        <span className={slot}><svg viewBox="0 0 20 22" className={app}><rect width="20" height="22" rx="2" fill="#171d24" /><path d="M6 6Q10 2 14 6M8 8Q10 6 12 8" fill="none" stroke="#3ab4f0" /><text x="10" y="18" textAnchor="middle" fontSize="8.500" fill="#fff" fontFamily="Open Sans, sans-serif">3CX</text></svg></span>
        <span className={slot}><Store className={app} /></span>
        <span className="flex h-[31px] w-[35px] items-start justify-center pt-1"><span className="flex h-8 w-7 justify-center rounded-sm bg-white/60 pt-2"><Edge className={app} /></span></span>
        <span className={slot}><Folder className={app} /></span>
        <span className={slot}><svg viewBox="0 0 20 20" className={app} preserveAspectRatio="none"><path d="M0 7 10 0 20 7V20H0z" fill="#0f5fa8" /><path d="M2 7H18L10 14z" fill="#fff" /><path d="M0 8 10 14 20 8V20H0z" fill="#2a8fe0" /></svg></span>
        <span className={slot + " relative"}><Chrome className={app} /><span className="absolute top-2 right-0 h-3.5 w-3 rounded-full bg-[#6f94bc] ring-1 ring-[#cfdcea]" /></span>
        <span className={slot}><DocTile letter="X" dark="#0f6b3a" light="#2fa568" className={app} /></span>
        <span className={slot}><DocTile letter="W" dark="#1a56b4" light="#3f92e4" className={app} /></span>
        <span className={slot}><svg viewBox="0 0 20 20" className={app}><path d="M4 6 12 0 20 6V20H4z" fill="#1a86d8" /><path d="M12 3 20 8V14H12z" fill="#5cc4f4" /><rect x="0" y="5" width="11" height="11" rx="1" fill="#0a5fae" /><text x="5.500" y="14" textAnchor="middle" fontSize="9" fontWeight="700" fill="#fff" fontFamily="Open Sans, sans-serif">O</text></svg></span>
        <span className={slot}><svg viewBox="0 0 20 22" className={app}><path d="M5 0H15L19 4 18 14 10 22 2 14 1 4z" fill="#f0502a" /><path d="M6 5 10 4 14 5 16 8 13 14 10 17 7 14 4 8z" fill="#fff" /><path d="M6 8 9 9 8 11zM14 8 11 9 12 11zM8 13H12L10 15z" fill="#f0502a" /></svg></span>
        <span className={slot}><svg viewBox="0 0 20 22" className={app}><rect width="20" height="22" fill="#f04a24" /><path d="M5 20V8Q6 3 9 4V14zM11 18V7L14 3Q16 8 15 13z" fill="#fff" /></svg></span>
        <span className={slot}><svg viewBox="0 0 20 20" className={app}><circle cx="11" cy="10" r="9.500" fill="#e8714e" /><path d="M11 .5A9.500 9.500 0 0 1 20.500 10H11z" fill="#f4a084" /><rect x="0" y="5" width="11" height="11" rx="1" fill="#c0391c" /><text x="5.500" y="14" textAnchor="middle" fontSize="9" fontWeight="700" fill="#fff" fontFamily="Open Sans, sans-serif">P</text></svg></span>
        <span className={slot + " relative"}><FaWhatsapp className="h-[22px] w-[19px] text-[#0f7a4c]" /><span className="absolute top-1 right-0 h-4 w-4 rounded-full bg-[#1478c4] text-center font-['Open_Sans',sans-serif] text-[10px] leading-4 text-white">57</span></span>
        <span className={slot}><svg viewBox="0 0 20 20" className={app}><rect x="2" y="1" width="15" height="11" fill="#1c2f9c" /><path d="M0 16 4 12H14L16 16z" fill="#5a6a9c" /><circle cx="15" cy="15" r="4.500" fill="#dfe6ec" /><path d="M13 15 15 17 17.500 13" fill="none" stroke="#58a83c" strokeWidth="1.500" /></svg></span>
        <span className={slot}><Snip className={app} /></span>
      </div>
    </footer>
  );
}

function Watermark() {
  return (
    <svg viewBox="0 0 120 72" className="absolute right-3 bottom-0.5 h-[72px] w-[120px]" role="img" aria-label="Erick Echeverria">
      <defs><linearGradient id="ring" x1="0" x2="1"><stop offset="0" stopColor="#0a12e8" /><stop offset=".55" stopColor="#1a2cf0" /><stop offset="1" stopColor="#3f7cff" /></linearGradient></defs>
      <path fillRule="evenodd" fill="url(#ring)" d="M60 4C94 2 118 16 118 34S94 66 60 65 1 53 1 34 28 6 60 4zM56 6C28 8 9 18 9 34S34 58 62 59s46-9 46-25S86 5 56 6z" />
      <g fontFamily="Liberation Sans, sans-serif" fontWeight="700">
        <text x="48" y="25" fontSize="13" fill="#2020e8" stroke="#b8c4ff" strokeWidth=".4">Ǝ</text>
        <text x="56" y="25" fontSize="13" fill="#4a7aff">E</text>
        <text x="19" y="29" fontSize="6" fill="#3a6cff">Erick</text>
        <text x="58" y="40" fontSize="12" textAnchor="middle" fill="#0c12e0" stroke="#0c12e0" strokeWidth=".4">ECHEVERRIA</text>
        <text x="58" y="44" fontSize="4" textAnchor="middle" fill="#1c4fb0">Asesoría y Consultoría Empresarial</text>
      </g>
      <path d="M56 8l1 3 3 1-3 1-1 3-1-3-3-1 3-1zM99 11l1 3 3 1-3 1-1 3-1-3-3-1 3-1z" fill="#dfe6ff" />
      <path d="M109 4l1 3 3 1-3 1-1 3-1-3-3-1 3-1zM85 20l1.200 3.500 3.500 1-3.500 1-1.200 3.500-1.200-3.500-3.500-1 3.500-1zM93 18l.7 2 2 .7-2 .7-.7 2-.7-2-2-.7 2-.7zM102 7l.7 2 2 .7-2 .7-.7 2-.7-2-2-.7 2-.7z" fill="#1a30f0" />
    </svg>
  );
}

export default function App() {
  return (
    <div className="relative flex h-screen flex-col overflow-hidden bg-[#202124]">
      <main className="flex min-h-0 flex-1 gap-3.5">
        <SharedScreen />
        <aside className="flex w-8 shrink-0 flex-col gap-3 font-['Roboto',sans-serif] text-[12px] font-medium text-white">
          <div className="flex h-[250px] shrink-0 items-end overflow-hidden rounded-bl-lg border-b-3 border-l-3 border-[#669df6] bg-[#3c4043] pb-2.5 pl-2">VIVI</div>
          <div className="flex min-h-0 flex-1 flex-col overflow-hidden rounded-l-lg bg-[#3c4043]">
            <div className="mt-[29px] flex-1 bg-[linear-gradient(#7b7f79,#878d89_50%,#7d8280_85%,#5a5c58)]" />
            <span className="h-7 pt-0.5 pl-[11px]">Eric</span>
          </div>
        </aside>
      </main>
      <CallBar />
      <Taskbar />
      <Watermark />
    </div>
  );
}
